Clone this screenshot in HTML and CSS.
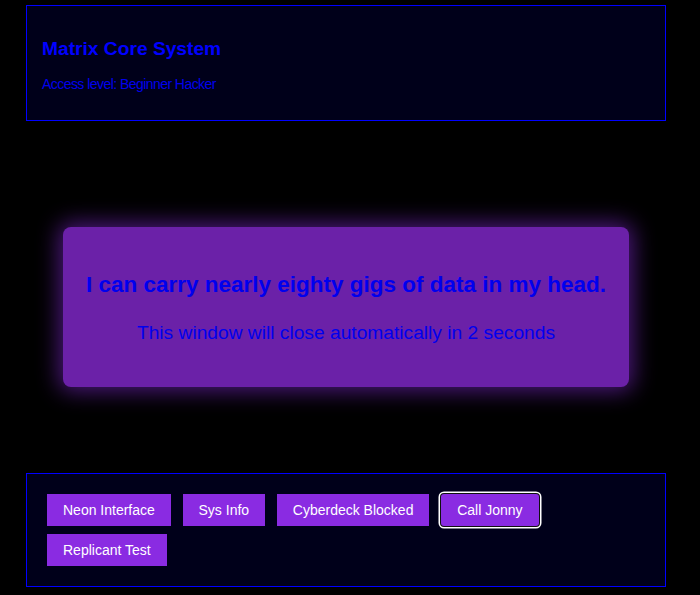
FILE: index.html
```html
<!DOCTYPE html>
<html lang="en">
<head>
<meta charset="utf-8">
<title>Matrix Core System</title>
<link rel="stylesheet" href="styles.css">
</head>
<body>
<div class="page">
  <header class="panel header">
    <h1 class="title">Matrix Core System</h1>
    <p class="subtitle">Access level: Beginner Hacker</p>
  </header>
  <div class="modal">
    <h2 class="modal-title">I can carry nearly eighty gigs of data in my head.</h2>
    <p class="modal-text">This window will close automatically in 2 seconds</p>
  </div>
  <footer class="panel actions">
    <button class="btn">Neon Interface</button>
    <button class="btn">Sys Info</button>
    <button class="btn">Cyberdeck Blocked</button>
    <button class="btn focused">Call Jonny</button>
    <button class="btn">Replicant Test</button>
  </footer>
</div>
</body>
</html>
```

FILE: styles.css
```css
html, body {
  margin: 0;
  padding: 0;
  background: #000;
}
body {
  font-family: "Liberation Sans", Arial, sans-serif;
  color: #0000ff;
}
.page {
  width: 640px;
  padding: 5px 0 0 26px;
}
.panel {
  border: 1px solid #0000ff;
  background: #00001a;
}
.header {
  padding: 32px 15px 28px;
}
.title {
  margin: 0;
  font-size: 19.2px;
  font-weight: bold;
  line-height: 22px;
  color: #0000ff;
}
.subtitle {
  margin: 16px 0 0;
  font-size: 14px;
  line-height: 16px;
  letter-spacing: -0.55px;
  color: #0000ee;
}
.modal {
  width: 566px;
  margin: 106px auto 86px;
  box-sizing: border-box;
  padding: 45px 10px 43px;
  background: #6b21a8;
  border-radius: 8px;
  text-align: center;
  box-shadow: 0 0 22px 4px rgba(138, 43, 226, 0.55);
}
.modal-title {
  margin: 0;
  font-size: 22.5px;
  line-height: 25px;
  font-weight: bold;
  color: #0000ee;
}
.modal-text {
  margin: 25px 0 0;
  font-size: 19.2px;
  line-height: 22px;
  color: #0000ee;
}
.actions {
  display: flex;
  flex-wrap: wrap;
  gap: 8px 11.7px;
  padding: 20px;
}
.btn {
  font-family: "Liberation Sans", Arial, sans-serif;
  font-size: 14px;
  line-height: 18px;
  padding: 7px 16px;
  border: 0;
  background: #8a2be2;
  color: #fff;
  cursor: pointer;
}
.focused {
  border-radius: 3px;
  box-shadow: 0 0 0 1px #101010, 0 0 0 2.5px #fff;
}
```
